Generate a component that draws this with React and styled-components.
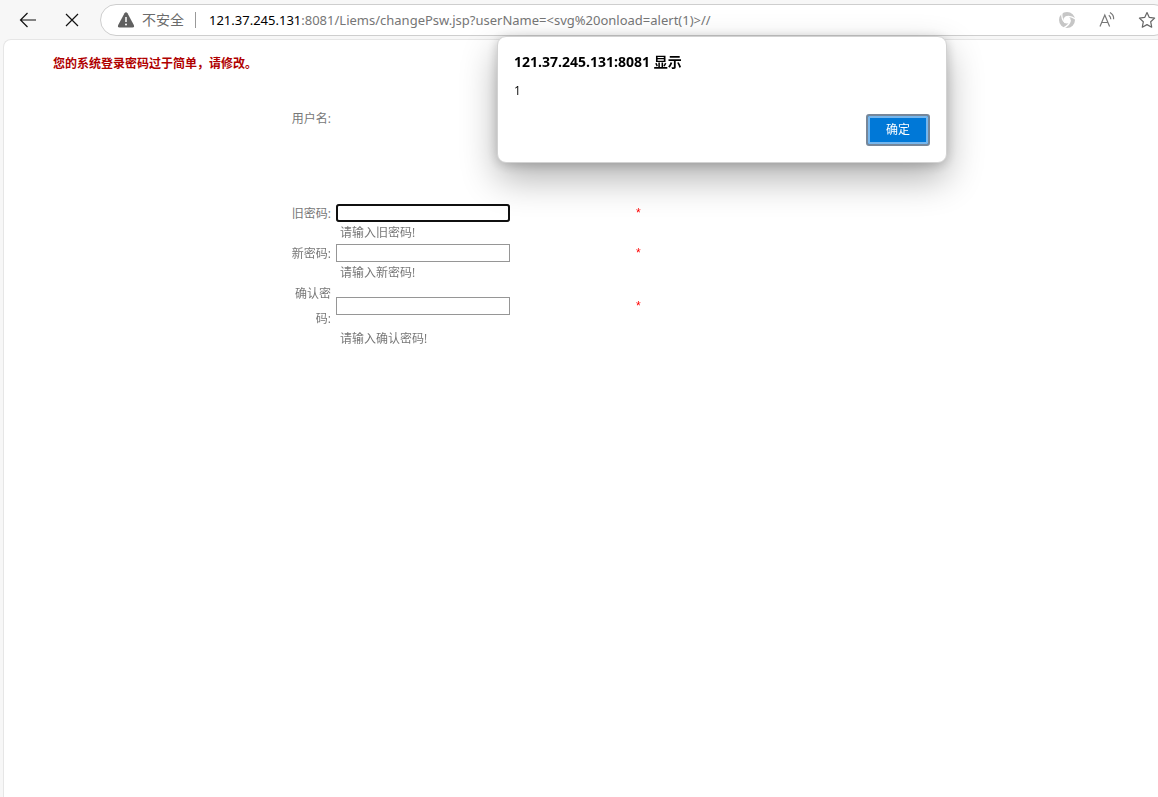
import React from "react";
import styled, { createGlobalStyle } from "styled-components";

const GlobalStyle = createGlobalStyle`
  * { box-sizing: border-box; }
  body {
    margin: 0;
    background: #f7f7f7;
    font-family: "Open Sans", "Noto Sans CJK SC", sans-serif;
    overflow-x: hidden;
  }
`;

const Browser = styled.div`
  position: relative;
  display: flex;
  flex-direction: column;
  min-height: 100vh;
`;

const Toolbar = styled.header`
  display: flex;
  align-items: center;
  padding: 4px 0 3px 16px;
`;

const NavButton = styled.button`
  display: flex;
  align-items: center;
  justify-content: center;
  width: 24px;
  height: 24px;
  margin-right: 20px;
  padding: 0;
  border: 0;
  background: none;
  color: #111;
`;

const AddressBar = styled.div`
  display: flex;
  flex: 1;
  align-items: center;
  min-width: 0;
  height: 32px;
  margin: 0 -12px 0 -4px;
  padding: 0 12px 0 16px;
  border: 1px solid #cecece;
  border-radius: 16px;
  background: #fff;
`;

const Security = styled.span`
  margin-left: 7px;
  padding-right: 11px;
  border-right: 1px solid #999;
  color: #6b6b6b;
  font-size: 14px;
  line-height: 16px;
`;

const Url = styled.span`
  flex: 1;
  min-width: 0;
  overflow: hidden;
  padding-left: 13px;
  color: #767676;
  font-family: "Noto Sans", sans-serif;
  font-size: 13px;
  line-height: 20px;
  white-space: nowrap;
`;

const Host = styled.span`
  color: #000;
`;

const Actions = styled.div`
  display: flex;
  gap: 20px;
`;

const ActionButton = styled(NavButton)`
  width: 20px;
  height: 20px;
  margin: 0;
`;

const Page = styled.main`
  flex: 1;
  margin-left: 3px;
  padding: 14px 0 0;
  border: 1px solid #e6e6e6;
  border-width: 1px 0 0 1px;
  border-top-left-radius: 8px;
  background: #fff;
`;

const Warning = styled.p`
  margin: 0 0 32px 49px;
  color: #b00000;
  font-size: 12px;
  font-weight: 700;
  line-height: 20px;
`;

const Form = styled.form`
  width: 596px;
  max-width: 100%;
  margin: 0 auto;
  color: #777;
  font-size: 12px;
`;

const Row = styled.div`
  display: grid;
  grid-template-columns: 48px 174px 1fr;
  grid-template-rows: 100%;
  column-gap: 5px;
  align-items: center;
  height: ${(p) => p.$height || 20}px;
  margin-bottom: ${(p) => p.$after || 0}px;
`;

const Label = styled.label`
  line-height: 25px;
  text-align: right;
`;

const Field = styled.input`
  width: 100%;
  height: 18px;
  padding: 1px 4px;
  border: 1px solid #969696;
  background: #fff;
  font: inherit;

  &:focus {
    border-radius: 3px;
    outline: 2px solid #101010;
    outline-offset: -2px;
  }
`;

const Required = styled.span`
  padding-left: 121px;
  color: #f00;
  font-family: "Liberation Sans", sans-serif;
`;

const Hint = styled.p`
  grid-column: 2 / -1;
  margin: 0;
  padding-left: 4px;
  line-height: 20px;
`;

const Dialog = styled.section`
  position: absolute;
  top: 36px;
  left: calc(50% + 143px);
  width: 450px;
  padding: 15px 16px 16px;
  transform: translateX(-50%);
  border: 1px solid #d2d2d2;
  border-radius: 9px;
  background: #fff;
  box-shadow: 0 16px 36px rgba(0, 0, 0, 0.3), 0 2px 12px rgba(0, 0, 0, 0.2);
  color: #000;
`;

const DialogTitle = styled.h1`
  margin: 0;
  font-size: 14px;
  font-weight: 700;
  line-height: 20px;
`;

const Message = styled.p`
  margin: 9px 0 13px;
  font-size: 12px;
  line-height: 20px;
`;

const DialogActions = styled.div`
  display: flex;
  justify-content: flex-end;
`;

const ConfirmButton = styled.button`
  width: 64px;
  height: 32px;
  padding: 0;
  border: 2px solid #76879a;
  border-radius: 3px;
  background: #0078d7;
  box-shadow: inset 0 0 0 2px #75b6ed;
  color: #fff;
  font: 12px/20px "Open Sans", "Noto Sans CJK SC", sans-serif;
`;

const BackIcon = () => (
  <svg width="18" height="16" viewBox="0 0 18 16" fill="none" stroke="currentColor" strokeWidth="1.2">
    <path d="M8.5 1 1.5 8l7 7M1.5 8H17" />
  </svg>
);

const StopIcon = () => (
  <svg width="14" height="14" viewBox="0 0 14 14" fill="none" stroke="currentColor" strokeWidth="1.2">
    <path d="m1 1 12 12M13 1 1 13" />
  </svg>
);

const WarningIcon = () => (
  <svg width="18" height="16" viewBox="0 0 18 16">
    <path d="M7.5 1.2Q9-.8 10.5 1.2L16.8 13Q17.6 15.5 15.4 15.5H2.6Q.4 15.5 1.2 13Z" fill="#606060" />
    <path d="M9 5v5" stroke="#fff" strokeWidth="1.5" />
    <circle cx="9" cy="12.5" r="1" fill="#fff" />
  </svg>
);

const SwirlIcon = () => (
  <svg width="18" height="18" viewBox="0 0 18 18" fill="none">
    <circle cx="9" cy="9" r="5.8" stroke="#c6c6c6" strokeWidth="4.4" />
    {[10, 130, 250].map((angle) => (
      <path
        key={angle}
        d="M7 6.4Q11 3.6 17.5 6.6"
        stroke="#fff"
        strokeWidth="1.3"
        transform={`rotate(${angle} 9 9)`}
      />
    ))}
  </svg>
);

const ReadAloudIcon = () => (
  <svg width="18" height="18" viewBox="0 0 18 18" fill="none" stroke="#777" strokeWidth="1.2">
    <path d="M2 15.5 6.8 4 11.6 15.5M3.8 11.5h6" />
    <path d="M10.8 4.2Q12.8 5.6 12.8 8.2M12 1.6Q16 4 15.6 8.2" />
  </svg>
);

const StarIcon = () => (
  <svg width="18" height="18" viewBox="0 0 18 18" fill="none" stroke="#666" strokeWidth="1.2" strokeLinejoin="round">
    <path d="m9 1.5 2.3 4.9 5.3.7-3.9 3.7 1 5.4L9 13.6l-4.7 2.6 1-5.4-3.9-3.7 5.3-.7Z" />
  </svg>
);

const fields = [
  { id: "old", label: "旧密码:", hint: "请输入旧密码!", height: 20, focus: true },
  { id: "new", label: "新密码:", hint: "请输入新密码!", height: 20 },
  { id: "confirm", label: "确认密码:", hint: "请输入确认密码!", height: 46 },
];

export default function App() {
  return (
    <>
      <GlobalStyle />
      <Browser>
        <Toolbar>
          <NavButton aria-label="返回"><BackIcon /></NavButton>
          <NavButton aria-label="停止"><StopIcon /></NavButton>
          <AddressBar>
            <WarningIcon />
            <Security>不安全</Security>
            <Url>
              <Host>121.37.245.131</Host>
              {":8081/Liems/changePsw.jsp?userName=<svg%20onload=alert(1)>//"}
            </Url>
            <Actions>
              <ActionButton aria-label="扩展"><SwirlIcon /></ActionButton>
              <ActionButton aria-label="大声朗读"><ReadAloudIcon /></ActionButton>
              <ActionButton aria-label="收藏"><StarIcon /></ActionButton>
            </Actions>
          </AddressBar>
        </Toolbar>
        <Page>
          <Warning>您的系统登录密码过于简单，请修改。</Warning>
          <Form>
            <Row $height={24} $after={73}>
              <Label as="span">用户名:</Label>
            </Row>
            {fields.map((f) => (
              <React.Fragment key={f.id}>
                <Row $height={f.height}>
                  <Label htmlFor={f.id}>{f.label}</Label>
                  <Field id={f.id} type="password" autoFocus={f.focus} />
                  <Required>*</Required>
                </Row>
                <Row>
                  <Hint>{f.hint}</Hint>
                </Row>
              </React.Fragment>
            ))}
          </Form>
        </Page>
        <Dialog role="dialog" aria-labelledby="dialog-title">
          <DialogTitle id="dialog-title">121.37.245.131:8081 显示</DialogTitle>
          <Message>1</Message>
          <DialogActions>
            <ConfirmButton>确定</ConfirmButton>
          </DialogActions>
        </Dialog>
      </Browser>
    </>
  );
}
